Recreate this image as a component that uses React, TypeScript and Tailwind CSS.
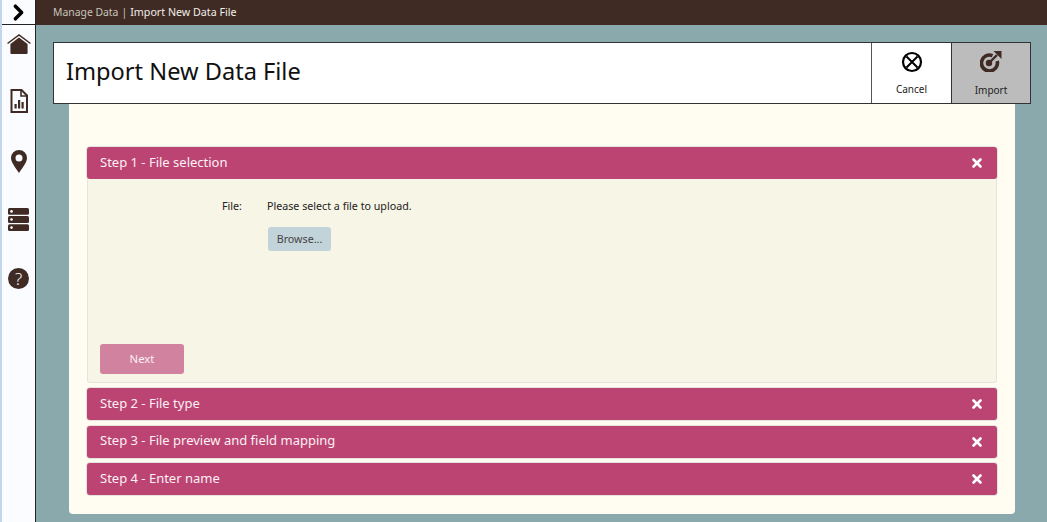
import { ChevronRight, X } from 'lucide-react'

const font = { fontFamily: '"Noto Sans", sans-serif' }

function StepHeader({ title }: { title: string }) {
  return (
    <div className="flex h-[32px] items-center justify-between rounded-[3px] bg-[#bb4473] px-[13px] text-[13px] text-[#fbf0f4] shadow-[0_0_0_1px_#e6e2dc]">
      <span className="pb-[1px]">{title}</span>
      <X size={14} strokeWidth={4.5} className="text-white" />
    </div>
  )
}

function Sidebar() {
  return (
    <div className="flex w-[36px] shrink-0 flex-col border-r border-[#222] bg-[#fbfcff] border-l-2 border-l-[#c3d6ea]">
      <div className="flex h-[25px] items-center justify-center border-b border-[#222]">
        <ChevronRight size={25} strokeWidth={3.4} className="text-black" />
      </div>
      <div className="flex flex-col items-center text-[#3f2b24]">
        <svg viewBox="0 0 26 22" className="mt-[8px] h-[21px] w-[26px]">
          <path d="M1 11 L13 2 L25 11" fill="none" stroke="currentColor" strokeWidth="1.6" />
          <path d="M4 11.5 L13 4.6 L22 11.5 V21 a1 1 0 0 1-1 1 H5 a1 1 0 0 1-1-1 Z" fill="currentColor" />
        </svg>
        <svg viewBox="0 0 18 24" className="mt-[35px] h-[24px] w-[18px]">
          <path d="M1.5 1 H11.5 L17 6.5 V23 H1.5 Z" fill="none" stroke="currentColor" strokeWidth="2" />
          <path d="M11 1 V7 H17" fill="none" stroke="currentColor" strokeWidth="1.6" />
          <path d="M4.5 15 h2.2 v4.5 h-2.2 Z M8 11 h2.2 v8.5 h-2.2 Z M11.5 13 h2.2 v6.5 h-2.2 Z" fill="currentColor" />
        </svg>
        <svg viewBox="0 0 16 23" className="mt-[37px] h-[23px] w-[16px]">
          <path fillRule="evenodd" d="M8 0 a8 8 0 0 1 8 8 c0 4-4 9-8 15 c-4-6-8-11-8-15 a8 8 0 0 1 8-8 Z M8 4.5 a3.5 3.5 0 1 0 0 7 a3.5 3.5 0 0 0 0-7 Z" fill="currentColor" />
        </svg>
        <svg viewBox="0 0 21 23" className="mt-[35px] h-[23px] w-[21px]">
          <rect x="0" y="0" width="21" height="6.8" rx="1.5" fill="currentColor" />
          <rect x="0" y="8.1" width="21" height="6.8" rx="1.5" fill="currentColor" />
          <rect x="0" y="16.2" width="21" height="6.8" rx="1.5" fill="currentColor" />
          <circle cx="3.5" cy="3.4" r="1.3" fill="#fff" />
          <circle cx="3.5" cy="11.5" r="1.3" fill="#fff" />
          <circle cx="3.5" cy="19.6" r="1.3" fill="#fff" />
        </svg>
        <div className="mt-[37px] flex h-[21px] w-[21px] items-center justify-center rounded-full bg-current">
          <span className="text-[17px] font-light leading-none text-white">?</span>
        </div>
      </div>
    </div>
  )
}

function TitleBar() {
  return (
    <div className="relative z-10 ml-[17px] mr-[16px] mt-[17px] flex h-[62px] border border-[#333] bg-white">
      <div className="flex flex-1 items-center pb-[2px] pl-[12px] text-[23.6px] text-[#111]">Import New Data File</div>
      <div className="flex w-[80px] flex-col items-center border-l border-[#555] text-[10px] text-[#222]">
        <svg viewBox="0 0 22 22" className="mt-[8px] h-[22px] w-[22px]">
          <circle cx="11" cy="11" r="9" fill="none" stroke="#000" strokeWidth="2.2" />
          <path d="M5.5 5.5 L16.5 16.5 M16.5 5.5 L5.5 16.5" stroke="#000" strokeWidth="2" />
        </svg>
        <span className="mt-[9px]">Cancel</span>
      </div>
      <div className="flex w-[79px] flex-col items-center border-l border-[#333] bg-[#bcbcbc] text-[10px] text-[#222]">
        <svg viewBox="0 0 22 22" className="mt-[7px] h-[22px] w-[22px] text-[#3f2b24]">
          <path d="M12.5 5.6 A8 8 0 1 0 17.2 11" fill="none" stroke="currentColor" strokeWidth="3.6" />
          <circle cx="9" cy="13" r="3.2" fill="currentColor" />
          <path d="M9 13 L17 5" stroke="currentColor" strokeWidth="2.4" />
          <path d="M13.5 1 H21.5 V9 Z" fill="currentColor" />
        </svg>
        <span className="mt-[11px]">Import</span>
      </div>
    </div>
  )
}

export default function App() {
  return (
    <div className="flex h-[522px] w-[1047px] overflow-hidden bg-[#89a9ac]" style={font}>
      <Sidebar />
      <div className="flex min-w-0 flex-1 flex-col">
        <div className="flex h-[25px] items-center bg-[#3f2b24] pl-[17px] text-[10.4px]">
          <span className="text-[#c8c4bc]">Manage Data</span>
          <span className="mx-[3px] text-[#c8c4bc]">|</span>
          <span className="text-[10.7px] text-[#f2eeea]">Import New Data File</span>
        </div>
        <TitleBar />
        <div className="ml-[33px] mr-[32px] flex h-[410px] flex-col rounded-b-[4px] bg-[#fffdf2] px-[18px] pt-[43px]">
          <StepHeader title="Step 1 - File selection" />
          <div className="flex h-[204px] flex-col justify-between rounded-b-[3px] border border-t-0 border-[#e6e2dc] bg-[#f7f5e6] pb-[8px] pl-[12px]">
            <div className="flex flex-col pt-[19px] text-[10.7px] text-[#222]">
              <div className="flex">
                <span className="ml-[122px] w-[45px]">File:</span>
                <span>Please select a file to upload.</span>
              </div>
              <button className="ml-[168px] mt-[13px] h-[24px] w-[63px] rounded-[3px] bg-[#c2d3d9] text-[10.7px] text-[#444]">
                Browse...
              </button>
            </div>
            <button className="h-[30px] w-[84px] rounded-[3px] bg-[#d0829e] text-[11.3px] text-[#fbf0f4]">Next</button>
          </div>
          <div className="mt-[5px] flex flex-col gap-[5.5px]">
            <StepHeader title="Step 2 - File type" />
            <StepHeader title="Step 3 - File preview and field mapping" />
            <StepHeader title="Step 4 - Enter name" />
          </div>
        </div>
      </div>
    </div>
  )
}
